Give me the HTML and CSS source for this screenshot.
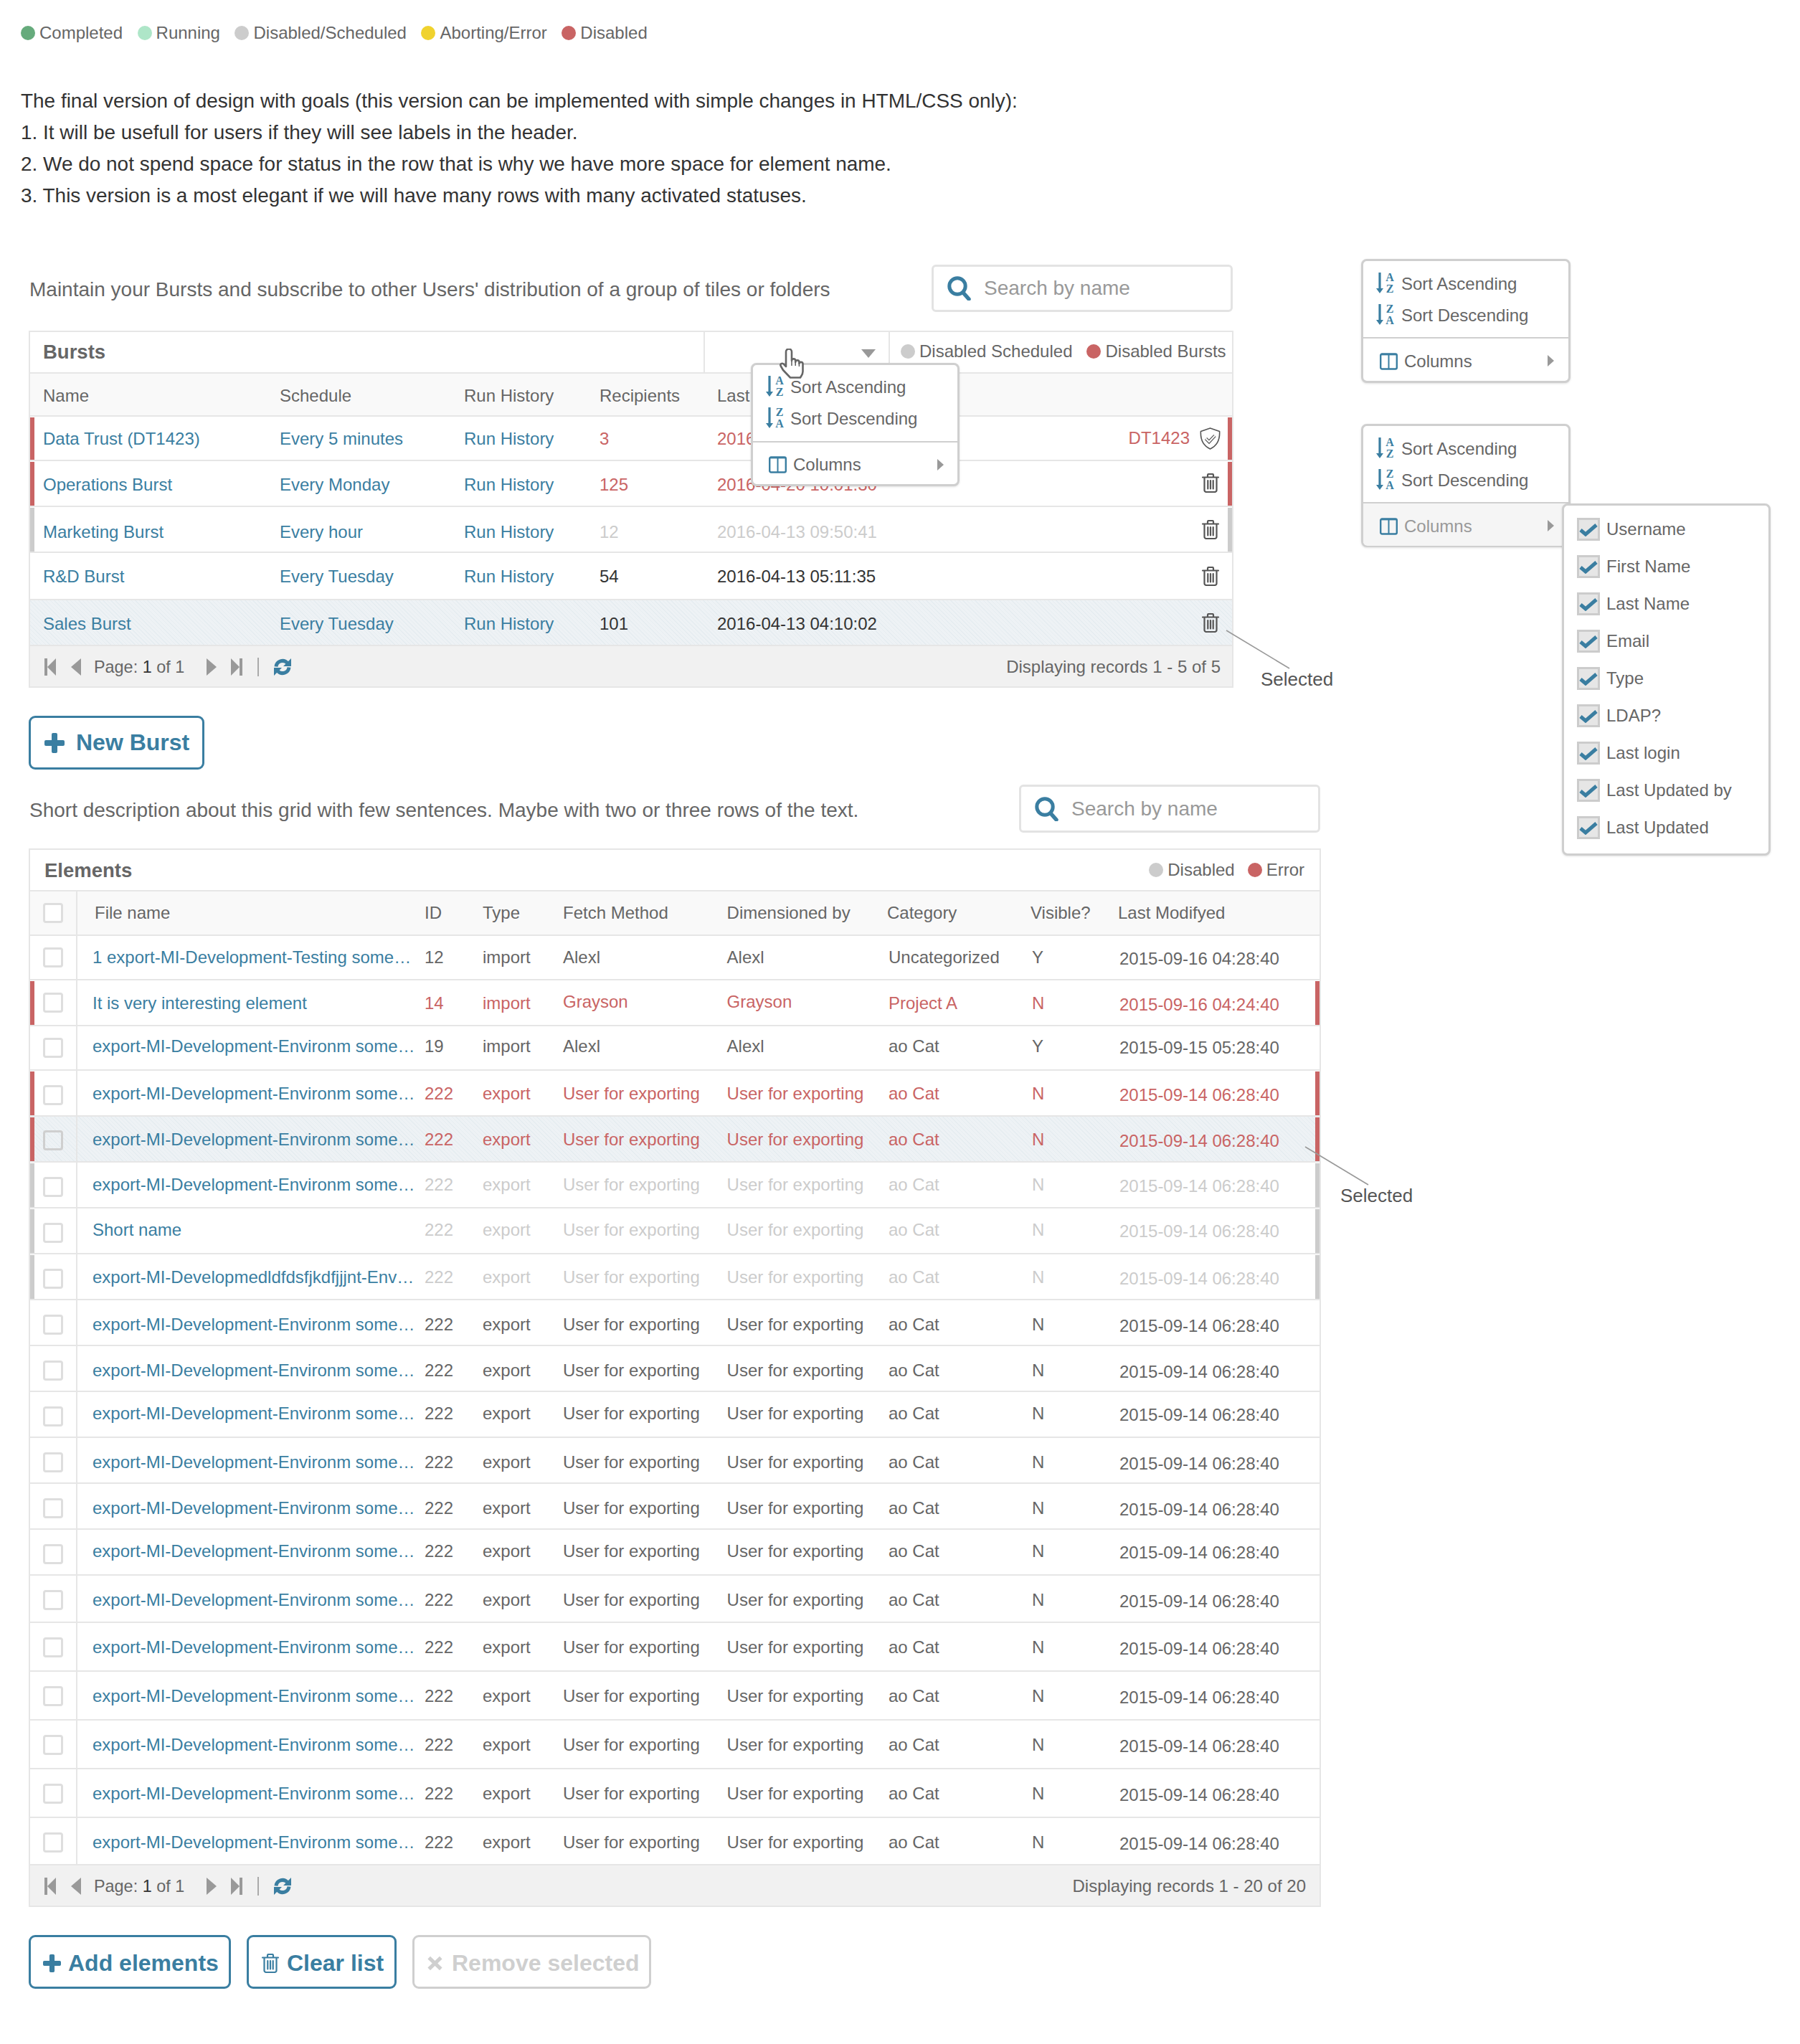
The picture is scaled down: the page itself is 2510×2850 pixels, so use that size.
FILE: index.html
```html
<!DOCTYPE html>
<html lang="en">
<head>
<meta charset="utf-8">
<title>Bursts and Elements</title>
<link rel="stylesheet" href="styles.css">
</head>
<body>
<svg class="sprite" aria-hidden="true">
  <symbol id="i-trash" viewBox="0 0 24 27"><g fill="none" stroke="currentColor" stroke-width="2.2" stroke-linecap="round"><path d="M1 5.5h22"/><path d="M8 5V2.6A1.6 1.6 0 0 1 9.6 1h4.8A1.6 1.6 0 0 1 16 2.6V5"/><path d="M3.5 6v17.5A2.5 2.5 0 0 0 6 26h12a2.5 2.5 0 0 0 2.5-2.5V6"/><path d="M8.3 10v11.5M12 10v11.5M15.7 10v11.5"/></g></symbol>
  <symbol id="i-search" viewBox="0 0 33 34"><circle cx="14" cy="14" r="11.2" fill="none" stroke="currentColor" stroke-width="5"/><path d="M22 23l8 9" fill="none" stroke="currentColor" stroke-width="5.5" stroke-linecap="round"/></symbol>
  <symbol id="i-arrow" viewBox="0 0 10 29"><path d="M3.4 0h3.2v22H10L5 29 0 22h3.4z" fill="currentColor"/></symbol>
  <symbol id="i-cols" viewBox="0 0 25 24"><rect x="1.2" y="1.5" width="22.6" height="21" rx="2" fill="none" stroke="currentColor" stroke-width="2.4"/><path d="M12.5 2v20" stroke="currentColor" stroke-width="2"/><path d="M1.5 2.2h22" stroke="currentColor" stroke-width="2.4"/></symbol>
  <symbol id="i-right" viewBox="0 0 9 16"><path d="M0 0l9 8-9 8z" fill="currentColor"/></symbol>
  <symbol id="i-first" viewBox="0 0 16 24"><path d="M0 0h4v24H0zM4 12L16 0v24z" fill="currentColor"/></symbol>
  <symbol id="i-prev" viewBox="0 0 14 24"><path d="M14 0v24L0 12z" fill="currentColor"/></symbol>
  <symbol id="i-next" viewBox="0 0 14 24"><path d="M0 0v24l14-12z" fill="currentColor"/></symbol>
  <symbol id="i-last" viewBox="0 0 16 24"><path d="M16 0h-4v24h4zM12 12L0 0v24z" fill="currentColor"/></symbol>
  <symbol id="i-sync" viewBox="0 0 24 24"><g fill="none" stroke="currentColor" stroke-width="5"><path d="M3 11.5A9 9 0 0 1 18.6 6.4"/><path d="M21 12.5A9 9 0 0 1 5.4 17.6"/></g><path d="M24 0v11H13zM0 24V13h11z" fill="currentColor"/></symbol>
  <symbol id="i-plus" viewBox="0 0 28 28"><path d="M10 2a2 2 0 0 1 2-2h4a2 2 0 0 1 2 2v8h8a2 2 0 0 1 2 2v4a2 2 0 0 1-2 2h-8v8a2 2 0 0 1-2 2h-4a2 2 0 0 1-2-2v-8H2a2 2 0 0 1-2-2v-4a2 2 0 0 1 2-2h8z" fill="currentColor"/></symbol>
  <symbol id="i-x" viewBox="0 0 21 21"><path d="M4 .8l6.5 6.2L17 .8l3.6 3.6-6.3 6.1 6.3 6.1-3.6 3.6-6.5-6.2L4 20.2.4 16.6l6.3-6.1L.4 4.4z" fill="currentColor"/></symbol>
  <symbol id="i-check" viewBox="0 0 26 20"><path d="M2 11l7 6L24 4" fill="none" stroke="currentColor" stroke-width="5"/></symbol>
</svg>

<div class="page">
  <div class="legend top-legend">
    <span class="lg-item"><i class="dot d-green"></i>Completed</span>
    <span class="lg-item"><i class="dot d-mint"></i>Running</span>
    <span class="lg-item"><i class="dot d-grey"></i>Disabled/Scheduled</span>
    <span class="lg-item"><i class="dot d-yellow"></i>Aborting/Error</span>
    <span class="lg-item"><i class="dot d-red"></i>Disabled</span>
  </div>

  <div class="intro">
    <p>The final version of design with goals (this version can be implemented with simple changes in HTML/CSS only):</p>
    <p>1. It will be usefull for users if they will see labels in the header.</p>
    <p>2. We do not spend space for status in the row that is why we have more space for element name.</p>
    <p>3. This version is a most elegant if we will have many rows with many activated statuses.</p>
  </div>

  <section class="sec sec1">
    <div class="desc-row">
      <p class="desc">Maintain your Bursts and subscribe to other Users' distribution of a group of tiles or folders</p>
      <div class="search"><svg class="ic-search"><use href="#i-search"/></svg><span>Search by name</span></div>
    </div>

    <div class="panel">
      <div class="title-bar">
        <h2 class="title">Bursts</h2>
        <div class="combo"><svg class="tri" viewBox="0 0 20 12"><path d="M0 0h20L10 12z"/></svg></div>
        <div class="legend bar-legend">
          <span class="lg-item"><i class="dot d-grey"></i>Disabled Scheduled</span>
          <span class="lg-item"><i class="dot d-red"></i>Disabled Bursts</span>
        </div>
      </div>
      <div class="brow bhead"><span>Name</span><span>Schedule</span><span>Run History</span><span>Recipients</span><span>Last</span></div>
      <div class="brow h62 t1 s-red c-red"><a class="lnk">Data Trust (DT1423)</a><a class="lnk">Every 5 minutes</a><a class="lnk">Run History</a><span>3</span><span>2016-04-20 12:00:00</span><span class="act"><span class="dtcode">DT1423</span><svg class="ic-shield" viewBox="0 0 29 31"><path d="M14.5 1L27.6 5.6C28.2 17 24 25.6 14.5 30 5 25.6.8 17 1.4 5.6z" fill="none" stroke="#555" stroke-width="1.6" stroke-linejoin="round"/><path d="M8.5 15.5l4.5 4.5 8-8.5" fill="none" stroke="#555" stroke-width="4.4"/><path d="M8.5 15.5l4.5 4.5 8-8.5" fill="none" stroke="#fff" stroke-width="2"/></svg></span></div>
      <div class="brow h64 t2 s-red c-red"><a class="lnk">Operations Burst</a><a class="lnk">Every Monday</a><a class="lnk">Run History</a><span>125</span><span>2016-04-20 10:01:30</span><span class="act act-up"><svg class="ic-trash"><use href="#i-trash"/></svg></span></div>
      <div class="brow h64 t4 s-grey c-dis"><a class="lnk">Marketing Burst</a><a class="lnk">Every hour</a><a class="lnk">Run History</a><span>12</span><span>2016-04-13 09:50:41</span><span class="act"><svg class="ic-trash"><use href="#i-trash"/></svg></span></div>
      <div class="brow h66 t1"><a class="lnk">R&amp;D Burst</a><a class="lnk">Every Tuesday</a><a class="lnk">Run History</a><span>54</span><span>2016-04-13 05:11:35</span><span class="act"><svg class="ic-trash"><use href="#i-trash"/></svg></span></div>
      <div class="brow h64 t2 sel"><a class="lnk">Sales Burst</a><a class="lnk">Every Tuesday</a><a class="lnk">Run History</a><span>101</span><span>2016-04-13 04:10:02</span><span class="act"><svg class="ic-trash"><use href="#i-trash"/></svg></span></div>
      <div class="pager pager1">
        <svg class="pg pg-first"><use href="#i-first"/></svg>
        <svg class="pg pg-prev"><use href="#i-prev"/></svg>
        <span class="pg-text">Page: <b>1</b> of 1</span>
        <svg class="pg pg-next"><use href="#i-next"/></svg>
        <svg class="pg pg-last"><use href="#i-last"/></svg>
        <i class="pg-div"></i>
        <svg class="pg-sync"><use href="#i-sync"/></svg>
        <span class="pg-info">Displaying records 1 - 5 of 5</span>
      </div>

      <div class="menu m-open">
        <div class="m-list">
          <div class="m-item"><svg class="ic-arrow"><use href="#i-arrow"/></svg><span class="az"><b>A</b><b>Z</b></span><span class="m-txt">Sort Ascending</span></div>
          <div class="m-item"><svg class="ic-arrow"><use href="#i-arrow"/></svg><span class="az"><b>Z</b><b>A</b></span><span class="m-txt">Sort Descending</span></div>
        </div>
        <div class="m-cols"><svg class="ic-cols"><use href="#i-cols"/></svg><span>Columns</span><svg class="ic-right"><use href="#i-right"/></svg></div>
      </div>
      <svg class="hand" viewBox="0 0 34 42"><path d="M9 4.5a4 4 0 0 1 8 0V17a2.6 2.6 0 0 1 5.2 0v2a2.6 2.6 0 0 1 5.2 0v2a2.6 2.6 0 0 1 5.1 0V32c0 4-2 6-3.5 8.5H15L5 30 1.8 24.5c-1.6-3 2-5 4.2-2.7L9 25z" fill="#fff" stroke="#666" stroke-width="2.6" stroke-linejoin="round"/><path d="M17 18v6M22.2 19v5M27.4 21v4" fill="none" stroke="#666" stroke-width="1.6"/></svg>
    </div>

    <button class="btn b-new"><svg class="ic-plus-l"><use href="#i-plus"/></svg>New Burst</button>
  </section>

  <section class="sec sec2">
    <div class="desc-row">
      <p class="desc">Short description about this grid with few sentences. Maybe with two or three rows of the text.</p>
      <div class="search"><svg class="ic-search"><use href="#i-search"/></svg><span>Search by name</span></div>
    </div>

    <div class="panel">
      <div class="title-bar">
        <h2 class="title">Elements</h2>
        <div class="legend bar-legend2">
          <span class="lg-item"><i class="dot d-grey"></i>Disabled</span>
          <span class="lg-item"><i class="dot d-red"></i>Error</span>
        </div>
      </div>
      <div class="grow ghead"><i class="box"></i><span class="fname">File name</span><span>ID</span><span>Type</span><span>Fetch Method</span><span>Dimensioned by</span><span>Category</span><span>Visible?</span><span>Last Modifyed</span></div>

      <div class="grow h62"><i class="box"></i><a class="lnk name">1 export-MI-Development-Testing some…</a><span>12</span><span>import</span><span>Alexl</span><span>Alexl</span><span>Uncategorized</span><span>Y</span><span class="date">2015-09-16 04:28:40</span></div>
      <div class="grow h64 t1 s-red c-red"><i class="box"></i><a class="lnk name">It is very interesting element</a><span>14</span><span>import</span><span class="hi">Grayson</span><span class="hi">Grayson</span><span>Project A</span><span>N</span><span class="date">2015-09-16 04:24:40</span></div>
      <div class="grow h62 t-2"><i class="box"></i><a class="lnk name">export-MI-Development-Environm some…</a><span>19</span><span>import</span><span>Alexl</span><span>Alexl</span><span>ao Cat</span><span>Y</span><span class="date">2015-09-15 05:28:40</span></div>
      <div class="grow h64 t1 b3 s-red c-red"><i class="box"></i><a class="lnk name">export-MI-Development-Environm some…</a><span>222</span><span>export</span><span>User for exporting</span><span>User for exporting</span><span>ao Cat</span><span>N</span><span class="date">2015-09-14 06:28:40</span></div>
      <div class="grow h64 t1 b2 s-red c-red sel"><i class="box"></i><a class="lnk name">export-MI-Development-Environm some…</a><span>222</span><span>export</span><span>User for exporting</span><span>User for exporting</span><span>ao Cat</span><span>N</span><span class="date">2015-09-14 06:28:40</span></div>
      <div class="grow h64 b3 s-grey c-dis"><i class="box"></i><a class="lnk name">export-MI-Development-Environm some…</a><span>222</span><span>export</span><span>User for exporting</span><span>User for exporting</span><span>ao Cat</span><span>N</span><span class="date">2015-09-14 06:28:40</span></div>
      <div class="grow h64 t-1 b3 s-grey c-dis"><i class="box"></i><a class="lnk name">Short name</a><span>222</span><span>export</span><span>User for exporting</span><span>User for exporting</span><span>ao Cat</span><span>N</span><span class="date">2015-09-14 06:28:40</span></div>
      <div class="grow h64 t1 b3 s-grey c-dis"><i class="box"></i><a class="lnk name">export-MI-Developmedldfdsfjkdfjjjnt-Env…</a><span>222</span><span>export</span><span>User for exporting</span><span>User for exporting</span><span>ao Cat</span><span>N</span><span class="date">2015-09-14 06:28:40</span></div>
      <div class="grow h64 t3 b3"><i class="box"></i><a class="lnk name">export-MI-Development-Environm some…</a><span>222</span><span>export</span><span>User for exporting</span><span>User for exporting</span><span>ao Cat</span><span>N</span><span class="date">2015-09-14 06:28:40</span></div>
      <div class="grow h64 t3 b3"><i class="box"></i><a class="lnk name">export-MI-Development-Environm some…</a><span>222</span><span>export</span><span>User for exporting</span><span>User for exporting</span><span>ao Cat</span><span>N</span><span class="date">2015-09-14 06:28:40</span></div>
      <div class="grow h64 t-1 b3"><i class="box"></i><a class="lnk name">export-MI-Development-Environm some…</a><span>222</span><span>export</span><span>User for exporting</span><span>User for exporting</span><span>ao Cat</span><span>N</span><span class="date">2015-09-14 06:28:40</span></div>
      <div class="grow h64 t3 b3"><i class="box"></i><a class="lnk name">export-MI-Development-Environm some…</a><span>222</span><span>export</span><span>User for exporting</span><span>User for exporting</span><span>ao Cat</span><span>N</span><span class="date">2015-09-14 06:28:40</span></div>
      <div class="grow h64 t3 b3"><i class="box"></i><a class="lnk name">export-MI-Development-Environm some…</a><span>222</span><span>export</span><span>User for exporting</span><span>User for exporting</span><span>ao Cat</span><span>N</span><span class="date">2015-09-14 06:28:40</span></div>
      <div class="grow h64 t-1 b3"><i class="box"></i><a class="lnk name">export-MI-Development-Environm some…</a><span>222</span><span>export</span><span>User for exporting</span><span>User for exporting</span><span>ao Cat</span><span>N</span><span class="date">2015-09-14 06:28:40</span></div>
      <div class="grow h66 t2 b2"><i class="box"></i><a class="lnk name">export-MI-Development-Environm some…</a><span>222</span><span>export</span><span>User for exporting</span><span>User for exporting</span><span>ao Cat</span><span>N</span><span class="date">2015-09-14 06:28:40</span></div>
      <div class="grow h68 t1 b1"><i class="box"></i><a class="lnk name">export-MI-Development-Environm some…</a><span>222</span><span>export</span><span>User for exporting</span><span>User for exporting</span><span>ao Cat</span><span>N</span><span class="date">2015-09-14 06:28:40</span></div>
      <div class="grow h68 t1 b1"><i class="box"></i><a class="lnk name">export-MI-Development-Environm some…</a><span>222</span><span>export</span><span>User for exporting</span><span>User for exporting</span><span>ao Cat</span><span>N</span><span class="date">2015-09-14 06:28:40</span></div>
      <div class="grow h68 t1 b1"><i class="box"></i><a class="lnk name">export-MI-Development-Environm some…</a><span>222</span><span>export</span><span>User for exporting</span><span>User for exporting</span><span>ao Cat</span><span>N</span><span class="date">2015-09-14 06:28:40</span></div>
      <div class="grow h68 t1 b1"><i class="box"></i><a class="lnk name">export-MI-Development-Environm some…</a><span>222</span><span>export</span><span>User for exporting</span><span>User for exporting</span><span>ao Cat</span><span>N</span><span class="date">2015-09-14 06:28:40</span></div>
      <div class="grow h66 t2 b2"><i class="box"></i><a class="lnk name">export-MI-Development-Environm some…</a><span>222</span><span>export</span><span>User for exporting</span><span>User for exporting</span><span>ao Cat</span><span>N</span><span class="date">2015-09-14 06:28:40</span></div>

      <div class="pager pager2">
        <svg class="pg pg-first"><use href="#i-first"/></svg>
        <svg class="pg pg-prev"><use href="#i-prev"/></svg>
        <span class="pg-text">Page: <b>1</b> of 1</span>
        <svg class="pg pg-next"><use href="#i-next"/></svg>
        <svg class="pg pg-last"><use href="#i-last"/></svg>
        <i class="pg-div"></i>
        <svg class="pg-sync"><use href="#i-sync"/></svg>
        <span class="pg-info">Displaying records 1 - 20 of 20</span>
      </div>
    </div>

    <div class="btn-row">
      <button class="btn b-add"><svg class="ic-plus-s"><use href="#i-plus"/></svg>Add elements</button>
      <button class="btn b-clear"><svg class="ic-trash-b"><use href="#i-trash"/></svg>Clear list</button>
      <button class="btn b-remove"><svg class="ic-x"><use href="#i-x"/></svg>Remove selected</button>
    </div>
  </section>

  <div class="menu m-side1">
    <div class="m-list">
      <div class="m-item"><svg class="ic-arrow"><use href="#i-arrow"/></svg><span class="az"><b>A</b><b>Z</b></span><span class="m-txt">Sort Ascending</span></div>
      <div class="m-item"><svg class="ic-arrow"><use href="#i-arrow"/></svg><span class="az"><b>Z</b><b>A</b></span><span class="m-txt">Sort Descending</span></div>
    </div>
    <div class="m-cols"><svg class="ic-cols"><use href="#i-cols"/></svg><span>Columns</span><svg class="ic-right"><use href="#i-right"/></svg></div>
  </div>

  <div class="menu m-side2">
    <div class="m-list">
      <div class="m-item"><svg class="ic-arrow"><use href="#i-arrow"/></svg><span class="az"><b>A</b><b>Z</b></span><span class="m-txt">Sort Ascending</span></div>
      <div class="m-item"><svg class="ic-arrow"><use href="#i-arrow"/></svg><span class="az"><b>Z</b><b>A</b></span><span class="m-txt">Sort Descending</span></div>
    </div>
    <div class="m-cols m-hover"><svg class="ic-cols"><use href="#i-cols"/></svg><span>Columns</span><svg class="ic-right"><use href="#i-right"/></svg></div>
  </div>

  <div class="submenu">
    <div class="sub-item"><i class="cbx"><svg><use href="#i-check"/></svg></i>Username</div>
    <div class="sub-item"><i class="cbx"><svg><use href="#i-check"/></svg></i>First Name</div>
    <div class="sub-item"><i class="cbx"><svg><use href="#i-check"/></svg></i>Last Name</div>
    <div class="sub-item"><i class="cbx"><svg><use href="#i-check"/></svg></i>Email</div>
    <div class="sub-item"><i class="cbx"><svg><use href="#i-check"/></svg></i>Type</div>
    <div class="sub-item"><i class="cbx"><svg><use href="#i-check"/></svg></i>LDAP?</div>
    <div class="sub-item"><i class="cbx"><svg><use href="#i-check"/></svg></i>Last login</div>
    <div class="sub-item"><i class="cbx"><svg><use href="#i-check"/></svg></i>Last Updated by</div>
    <div class="sub-item"><i class="cbx"><svg><use href="#i-check"/></svg></i>Last Updated</div>
  </div>

  <svg class="callout c1" viewBox="0 0 90 55"><path d="M1 1l88 53"/></svg>
  <span class="note n1">Selected</span>
  <svg class="callout c2" viewBox="0 0 90 55"><path d="M1 1l88 53"/></svg>
  <span class="note n2">Selected</span>
</div>
</body>
</html>
```

FILE: styles.css
```css
* { box-sizing: border-box; }
html, body { margin: 0; padding: 0; background: #fff; }
body { font-family: "Liberation Sans", Arial, sans-serif; font-size: 24px; color: #666; }
p, h2 { margin: 0; }
i { display: block; font-style: normal; }
.sprite { position: absolute; width: 0; height: 0; }

.page { position: relative; width: 2510px; height: 2850px; padding-top: 31px; padding-left: 29px; overflow: hidden; }

/* legends */
.legend { display: flex; align-items: center; }
.lg-item { display: flex; align-items: center; gap: 6px; white-space: nowrap; }
.dot { width: 20px; height: 20px; border-radius: 50%; flex: none; }
.d-green { background: #66ab7c; }
.d-mint { background: #aee6c8; }
.d-grey { background: #cccccc; }
.d-yellow { background: #f0d22e; }
.d-red { background: #c96464; }
.top-legend { height: 30px; gap: 20.5px; }

/* intro */
.intro { margin-top: 58px; font-size: 27.95px; line-height: 44px; color: #333; }

/* sections */
.sec { margin-left: 11px; }
.sec1 { width: 1680px; margin-top: 74px; }
.sec2 { width: 1802px; margin-top: 21px; }
.desc-row { display: flex; align-items: center; justify-content: space-between; }
.sec1 .desc-row { height: 66px; margin-bottom: 26px; }
.sec2 .desc-row { height: 67px; margin-bottom: 22px; }
.desc { font-size: 28px; padding-top: 4px; margin-left: 1px; }
.search { display: flex; align-items: center; gap: 18px; width: 420px; height: 100%; padding: 0 0 0 19px; margin-right: 1px; border: 3px solid #e3e3e3; border-radius: 6px; font-size: 28px; color: #999; }
.ic-search { width: 33px; height: 34px; color: #3a7ea1; flex: none; }

/* panels */
.panel { position: relative; border: 2px solid #e6e6e6; }
.title-bar { display: flex; align-items: stretch; height: 58px; border-bottom: 2px solid #e6e6e6; }
.title { flex: 1; font-size: 27.5px; font-weight: bold; color: #666; line-height: 56px; padding-left: 18px; }
.sec2 .title { padding-left: 20px; line-height: 58px; }
.combo { position: relative; width: 260px; border-left: 2px solid #e6e6e6; border-right: 2px solid #e6e6e6; }
.tri { position: absolute; right: 18px; top: 24px; width: 20px; height: 12px; fill: #999; }
.bar-legend { width: 477px; padding: 0 0 2px 15px; gap: 20px; }
.bar-legend2 { padding-right: 21px; gap: 18px; }

/* burst grid */
.brow { position: relative; display: grid; grid-template-columns: 330px 257px 189px 164px 400px 1fr; align-items: center; padding-left: 18px; border-bottom: 2px solid #e6e6e6; color: #333; white-space: nowrap; }
.bhead { height: 60px; background: #f9f9f9; color: #666; --t: 3px; }
.brow > * { margin-top: var(--t, 0px); }
.lnk { color: #3a7ea1; }
.act { display: flex; align-items: center; justify-content: flex-end; gap: 14px; padding-right: 18px; }
.brow > .act { margin-top: 0; }
.brow > .act-up { margin-top: -2px; }
.dtcode { color: #c96464; }
.ic-trash { width: 24px; height: 27px; color: #555; flex: none; }
.ic-shield { width: 29px; height: 31px; flex: none; margin-right: -2px; }

.h62 { height: 62px; }
.h64 { height: 64px; }
.h66 { height: 66px; }
.h68 { height: 68px; }
.t-2 { --t: -4px; }
.t-1 { --t: -2px; }
.t1 { --t: 2px; }
.t2 { --t: 4px; }
.t3 { --t: 6px; }
.t4 { --t: 8px; }
.b1 { --b: 2px; }
.b2 { --b: 4px; }
.b3 { --b: 6px; }

.c-red { color: #c96464; }
.c-dis { color: #cccccc; }
.sel { background: repeating-linear-gradient(45deg, #eef2f5 0 3px, #e5ecf0 3px 4px); }
.s-red::before, .s-red::after, .s-grey::before, .s-grey::after { content: ""; position: absolute; top: 1px; bottom: 0; width: 6px; margin: 0; }
.s-red::before, .s-grey::before { left: 0; }
.s-red::after, .s-grey::after { right: 0; }
.s-red::before, .s-red::after { background: #c96464; }
.s-grey::before, .s-grey::after { background: #cccccc; }

/* elements grid */
.grow { position: relative; display: grid; grid-template-columns: 65px 485px 81px 112px 228.6px 225.4px 200px 122px 1fr; align-items: center; border-bottom: 2px solid #e6e6e6; white-space: nowrap; }
.grow > * { margin-top: var(--t, 0px); }
.grow > .box { margin-top: var(--b, 0px); justify-self: start; margin-left: 18px; }
.grow > .date { margin-top: calc(var(--t, 0px) + 4px); }
.grow > .hi { margin-top: calc(var(--t, 0px) - 4px); }
.ghead { height: 62px; background: #f9f9f9; grid-template-columns: 65px 485px 81px 112px 228.6px 223.4px 200px 122px 1fr; }
.ghead > .fname { padding-left: 25px; }
.name { display: block; padding-left: 22px; }
.box { width: 28px; height: 28px; border: 3px solid #dedede; border-radius: 4px; background: #fff; }
.sel .box { background: transparent; border-color: #cfcfcf; }
.grow .box::after { content: ""; position: absolute; left: 64px; top: 0; bottom: 0; width: 2px; background: #e6e6e6; }

/* pager */
.pager { display: flex; align-items: center; height: 56px; padding: 2px 0 0 20px; background: #f1f1f1; }
.pg { height: 24px; color: #999; flex: none; }
.pg-first { width: 16px; }
.pg-prev { width: 14px; margin-left: 21px; }
.pg-text { width: 126px; margin-left: 18px; white-space: nowrap; font-size: 23.4px; }
.pg-text b { font-weight: normal; color: #333; }
.pg-next { width: 14px; margin-left: 31px; }
.pg-last { width: 16px; margin-left: 20px; }
.pg-div { width: 2px; height: 26px; margin-left: 21px; background: #aaa; }
.pg-sync { width: 24px; height: 24px; margin-left: 21px; color: #3a7ea1; flex: none; }
.pg-info { margin-left: auto; }
.pager1 .pg-info { padding-right: 16px; }
.pager2 .pg-info { padding-right: 19px; }

/* menus */
.menu { position: absolute; width: 291px; height: 172px; background: #fff; border: 3px solid #cfcfcf; border-radius: 8px; box-shadow: 0 1px 3px rgba(0,0,0,.12); color: #666; z-index: 3; }
.m-open { left: 1005px; top: 43px; }
.m-side1 { left: 1898px; top: 361px; width: 292px; height: 173px; }
.m-side2 { left: 1898px; top: 591px; width: 292px; }
.m-list { height: 108px; padding-top: 9px; border-bottom: 2px solid #cfcfcf; }
.m-side1 .m-list, .m-side2 .m-list { padding-top: 10px; }
.m-item { display: flex; align-items: center; height: 44px; padding-left: 18px; }
.ic-arrow { width: 10px; height: 29px; color: #3a7ea1; flex: none; margin-top: -3px; }
.az { display: flex; flex-direction: column; width: 12px; margin-left: 3px; margin-top: -3px; font-family: "Liberation Serif", serif; font-size: 16px; line-height: 16px; color: #3a7ea1; text-align: center; }
.az b { display: block; }
.m-txt { margin-left: 9px; white-space: nowrap; }
.m-side1 .m-txt, .m-side2 .m-txt { margin-left: 10px; }
.m-cols { position: relative; display: flex; align-items: center; height: 59px; padding-left: 22px; padding-top: 2px; border-radius: 0 0 6px 6px; }
.m-side1 .m-cols, .m-side2 .m-cols { padding-left: 23px; padding-top: 4px; }
.ic-cols { width: 25px; height: 24px; margin-right: 9px; color: #3a7ea1; flex: none; }
.ic-right { position: absolute; left: 257px; top: 23px; width: 9px; height: 16px; color: #999; }
.m-hover { background: #f5f5f5; color: #999; }
.submenu { position: absolute; left: 2178px; top: 702px; width: 291px; height: 491px; padding: 7px 0 0 18px; background: #fff; border: 3px solid #cfcfcf; border-radius: 8px; box-shadow: 0 1px 3px rgba(0,0,0,.12); z-index: 4; }
.sub-item { display: flex; align-items: center; gap: 9px; height: 52px; white-space: nowrap; }
.cbx { display: flex; align-items: center; justify-content: center; width: 32px; height: 32px; background: #e6e6e6; border: 3px solid #cccccc; flex: none; color: #3a7ea1; }
.cbx svg { width: 26px; height: 20px; }

.hand { position: absolute; left: 1045px; top: 23px; width: 34px; height: 42px; z-index: 5; }

/* buttons */
.btn { display: flex; align-items: center; height: 75px; margin: 0; background: #fff; border: 3px solid #3a7ea1; border-radius: 9px; font-family: "Liberation Sans", Arial, sans-serif; font-size: 32px; font-weight: bold; color: #3a7ea1; white-space: nowrap; }
.b-new { width: 245px; margin-top: 39px; padding: 0 0 0 19px; gap: 16px; }
.ic-plus-l { width: 28px; height: 28px; flex: none; }
.btn-row { display: flex; gap: 22px; margin-top: 39px; }
.b-add { width: 282px; padding: 3px 0 0 17px; gap: 10px; }
.ic-plus-s { width: 25px; height: 25px; flex: none; }
.b-clear { width: 209px; padding: 3px 0 0 18px; gap: 11px; }
.ic-trash-b { width: 24px; height: 27px; flex: none; }
.b-remove { width: 333px; padding: 3px 0 0 18px; gap: 13px; border-color: #cfcfcf; color: #cfcfcf; }
.ic-x { width: 21px; height: 21px; flex: none; }

/* callouts */
.callout { position: absolute; width: 90px; height: 55px; z-index: 2; fill: none; stroke: #999; stroke-width: 1.6; }
.c1 { left: 1709px; top: 878px; }
.c2 { left: 1819px; top: 1598px; }
.note { position: absolute; font-size: 26px; color: #555; white-space: nowrap; }
.n1 { left: 1758px; top: 932px; }
.n2 { left: 1869px; top: 1652px; }
```
